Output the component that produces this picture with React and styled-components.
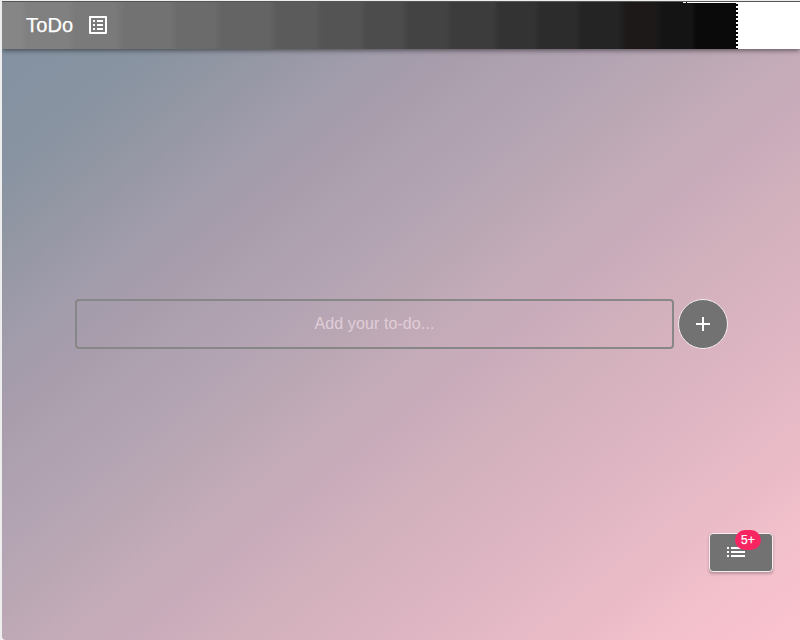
import React from "react";
import styled, { createGlobalStyle } from "styled-components";

const GlobalStyle = createGlobalStyle`
  * { box-sizing: border-box; }
  html, body { margin: 0; background: #eeeeee; overflow: hidden; }
  body, input, button { font-family: "Liberation Sans", Arial, sans-serif; }
`;

const navBands = [
  [0, 18, "#868686"], [26, 65, "#808080"], [73, 113, "#7a7a7a"], [123, 168, "#727272"],
  [176, 212, "#6b6b6b"], [220, 267, "#646464"], [275, 313, "#5b5b5b"],
  [320, 358, "#545454"], [364, 399, "#4c4c4c"], [407, 444, "#434343"],
  [450, 491, "#3c3c3c"], [497, 532, "#333333"], [538, 574, "#2c2c2c"],
  [580, 616, "#242424"], [624, 652, "#1d1919"], [660, 690, "#141414"],
  [694, 734, "#0a0a0a"], [734, 798, "#ffffff"],
];
const navGradient = navBands
  .map(([from, to, color]) => `${color} ${from}px ${to}px`)
  .join(", ");

const Page = styled.div`
  height: 640px;
  margin-left: 2px;
  border-top: 1px solid #eeeeee;
  display: flex;
  flex-direction: column;
  border-bottom-left-radius: 4px;
  overflow: hidden;
  background: linear-gradient(
    to bottom right,
    #8391a1 0%, #8793a1 12%, #9497a4 20%, #a19cab 27%, #a99dac 33%,
    #b3a4b3 42%, #bba7b4 48%, #c4abb8 53%, #caacbb 59%, #d2b1bc 65%,
    #d9b3c0 71%, #e3b8c5 79%, #ebbcc8 86%, #f3c1cc 92%, #fac1cf 98%
  );
`;

const NavBar = styled.header`
  position: relative;
  flex: none;
  height: 48px;
  padding: 0 24px 2px;
  display: flex;
  align-items: center;
  color: #ffffff;
  background: linear-gradient(to right, ${navGradient});
  border-top: 1px solid #555;
  box-shadow: 0 2px 4px -1px rgba(0, 0, 0, 0.3), 0 2px 5px rgba(0, 0, 0, 0.26);
`;

const Perforation = styled.span`
  position: absolute;
  left: 734px;
  top: 2px;
  width: 2px;
  height: 45px;
  background: repeating-linear-gradient(to bottom, #000 0 2px, #fff 2px 4px);
`;

const TopGap = styled.span`
  position: absolute;
  left: 681px;
  top: 0;
  width: 53px;
  height: 1px;
  background: linear-gradient(to right, #fff 0 3px, #111 3px 4px, #fff 4px);
`;

const Title = styled.h1`
  margin: 0;
  font-size: 20px;
  font-weight: 400;
  line-height: 24px;
  letter-spacing: 0.15px;
  -webkit-text-stroke: 0.25px currentColor;
  transform: translateY(-0.5px);
`;

const Icon = styled.svg`
  display: block;
  width: 24px;
  height: 24px;
  fill: currentColor;
`;

const TitleIcon = styled(Icon)`
  margin-left: 12.5px;
`;

const Main = styled.main`
  flex: 1;
  display: flex;
  flex-direction: column;
  justify-content: space-between;
  padding: 249px 27px 68.5px 73px;
`;

const Form = styled.form`
  display: flex;
  align-items: center;
  gap: 4px;
`;

const TodoInput = styled.input`
  width: 599px;
  height: 50px;
  padding: 0;
  text-align: center;
  font-size: 16px;
  letter-spacing: 0.1px;
  color: #fff;
  background: transparent;
  border: 2px solid #888788;
  border-radius: 4px;
  outline: none;
  &::placeholder { color: #e0ced8; opacity: 1; }
`;

const AddButton = styled.button`
  width: 50px;
  height: 50px;
  margin-top: 1px;
  padding: 0;
  display: grid;
  place-items: center;
  color: #fff;
  background: #727272;
  border: 1px solid #f5edf0;
  border-radius: 50%;
`;

const ListButton = styled.button`
  position: relative;
  align-self: flex-end;
  width: 64px;
  height: 39px;
  padding: 0 11px 1px 0;
  display: grid;
  place-items: center;
  color: #fff;
  background: #727272;
  border: 1px solid #f5edf0;
  border-radius: 4px;
  box-shadow: 0 2px 3px rgba(0, 0, 0, 0.24);
`;

const Badge = styled.span`
  position: absolute;
  left: 25px;
  top: -4px;
  width: 26px;
  height: 20px;
  border-radius: 10px;
  background: #f72562;
  color: #fff;
  font-size: 12px;
  line-height: 20px;
  letter-spacing: 0.2px;
  text-align: center;
  -webkit-text-stroke: 0.25px currentColor;
`;

export default function App() {
  return (
    <>
      <GlobalStyle />
      <Page>
        <NavBar>
          <Title>ToDo</Title>
          <TitleIcon viewBox="0 0 24 24">
            <path d="M19 5v14H5V5h14m1.1-2H3.9c-.5 0-.9.4-.9.9v16.2c0 .4.4.9.9.9h16.2c.4 0 .9-.5.9-.9V3.9c0-.5-.5-.9-.9-.9zM11 7h6v2h-6V7zm0 4h6v2h-6v-2zm0 4h6v2h-6zM7 7h2v2H7zm0 4h2v2H7zm0 4h2v2H7z" />
          </TitleIcon>
          <TopGap />
          <Perforation />
        </NavBar>
        <Main>
          <Form onSubmit={(event) => event.preventDefault()}>
            <TodoInput placeholder="Add your to-do..." />
            <AddButton aria-label="Add">
              <Icon viewBox="0 0 24 24">
                <path d="M19 13h-6v6h-2v-6H5v-2h6V5h2v6h6v2z" />
              </Icon>
            </AddButton>
          </Form>
          <ListButton aria-label="Show list">
            <Icon viewBox="0 0 24 24">
              <path d="M3 13h2v-2H3v2zm0 4h2v-2H3v2zm0-8h2V7H3v2zm4 4h14v-2H7v2zm0 4h14v-2H7v2zM7 7v2h14V7H7z" />
            </Icon>
            <Badge>5+</Badge>
          </ListButton>
        </Main>
      </Page>
    </>
  );
}
